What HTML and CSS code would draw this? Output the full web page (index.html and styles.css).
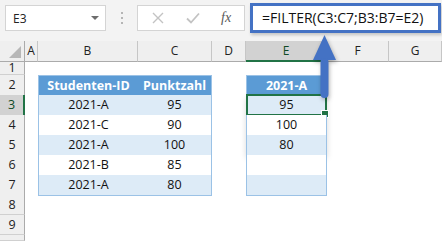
FILE: index.html
```html
<!DOCTYPE html>
<html lang="de">
<head>
  <meta charset="UTF-8" />
  <title>FILTER - Excel</title>
  <link rel="stylesheet" href="styles.css">
</head>
<body>

  <div class="formula-bar">
    <div class="name-box">
      <span>E3</span>
      <span class="drop"></span>
    </div>
    <div class="dots"><i></i><i></i><i></i></div>
    <div class="fx-buttons">
      <svg class="btn-icon" width="12" height="12" viewBox="0 0 12 12">
        <path d="M1 1 L11 11 M11 1 L1 11" stroke="#c3c3c3" stroke-width="1.4" fill="none" />
      </svg>
      <svg class="btn-icon" width="14" height="12" viewBox="0 0 14 12">
        <path d="M1 6.5 L5 10.5 L13 1.5" stroke="#c3c3c3" stroke-width="1.8" fill="none" />
      </svg>
      <span class="fx">fx</span>
    </div>
    <div class="formula-box">=FILTER(C3:C7;B3:B7=E2)</div>
  </div>

  <div class="sheet">
    <div class="row head-row">
      <div class="corner"><span class="tri"></span></div>
      <div class="col-head">A</div>
      <div class="col-head">B</div>
      <div class="col-head">C</div>
      <div class="col-head">D</div>
      <div class="col-head active">E</div>
      <div class="col-head">F</div>
      <div class="col-head">G</div>
    </div>

    <div class="row short">
      <div class="row-head">1</div>
      <div></div><div></div><div></div><div></div><div></div><div></div><div></div>
    </div>

    <div class="row">
      <div class="row-head">2</div>
      <div></div>
      <div class="cell th first">Studenten-ID</div>
      <div class="cell th last">Punktzahl</div>
      <div></div>
      <div class="cell th solo">2021-A</div>
      <div></div><div></div>
    </div>

    <div class="row">
      <div class="row-head active">3</div>
      <div></div>
      <div class="cell band first">2021-A</div>
      <div class="cell band last">95</div>
      <div></div>
      <div class="cell band solo">
        95
        <div class="spill"></div>
        <div class="selected"><span class="handle"></span></div>
      </div>
      <div></div><div></div>
    </div>

    <div class="row">
      <div class="row-head">4</div>
      <div></div>
      <div class="cell first">2021-C</div>
      <div class="cell last">90</div>
      <div></div>
      <div class="cell solo">100</div>
      <div></div><div></div>
    </div>

    <div class="row">
      <div class="row-head">5</div>
      <div></div>
      <div class="cell band first">2021-A</div>
      <div class="cell band last">100</div>
      <div></div>
      <div class="cell band solo">80</div>
      <div></div><div></div>
    </div>

    <div class="row">
      <div class="row-head">6</div>
      <div></div>
      <div class="cell first">2021-B</div>
      <div class="cell last">85</div>
      <div></div>
      <div class="cell solo"></div>
      <div></div><div></div>
    </div>

    <div class="row">
      <div class="row-head">7</div>
      <div></div>
      <div class="cell band first">2021-A</div>
      <div class="cell band last">80</div>
      <div></div>
      <div class="cell band solo"></div>
      <div></div><div></div>
    </div>

    <div class="row">
      <div class="row-head">8</div>
      <div></div><div></div><div></div><div></div><div></div><div></div><div></div>
    </div>

    <div class="row">
      <div class="row-head">9</div>
      <div></div><div></div><div></div><div></div><div></div><div></div><div></div>
    </div>

    <div class="row partial">
      <div class="row-head"></div>
      <div></div><div></div><div></div><div></div><div></div><div></div><div></div>
    </div>
  </div>

  <!-- pointer from the spill range up to the formula -->
  <svg class="arrow" width="30" height="70" viewBox="0 0 30 70">
    <path d="M12.5 0 L1 25 L24 25 Z" fill="#4472c4" />
    <rect x="8.5" y="23" width="8" height="40" rx="4" fill="#4472c4" />
  </svg>

</body>
</html>
```

FILE: styles.css
```css
body {
  margin: 0;
  width: 442px;
  height: 241px;
  overflow: hidden;
  background-color: white;
  font-family: "Open Sans", "Liberation Sans", sans-serif;
  position: relative;
}


/* formula bar */

.formula-bar {
  height: 41px;
  background-color: #f3f3f3;
  display: flex;
  align-items: flex-start;
  padding: 5px 0 0 5px;
  box-sizing: border-box;
}

.name-box {
  width: 101px;
  height: 26px;
  box-sizing: border-box;
  background-color: white;
  border: 1px solid #d4d4d4;
  display: flex;
  align-items: center;
  justify-content: space-between;
  padding: 0 6px 0 7px;
  font-size: 12px;
  color: #222;
}

.drop {
  width: 0;
  height: 0;
  border-left: 4px solid transparent;
  border-right: 4px solid transparent;
  border-top: 4px solid #6d6d6d;
}

.dots {
  width: 31px;
  height: 26px;
  display: flex;
  flex-direction: column;
  align-items: center;
  justify-content: center;
  gap: 3px;
}

.dots i {
  width: 2px;
  height: 2px;
  background-color: #b5b5b5;
}

.fx-buttons {
  width: 108px;
  height: 26px;
  box-sizing: border-box;
  background-color: white;
  border: 1px solid #d4d4d4;
  display: flex;
  align-items: center;
  padding-left: 14px;
  gap: 22px;
}

.fx {
  font-family: "Liberation Serif", serif;
  font-style: italic;
  font-size: 14px;
  color: #5a5a5a;
  margin-left: -1px;
}

.formula-box {
  width: 191px;
  height: 30px;
  margin: -2px 0 0 5px;
  box-sizing: border-box;
  background-color: white;
  border: 3px solid #4472c4;
  box-shadow: 1px 2px 3px rgba(0, 0, 0, 0.2);
  font-size: 14px;
  line-height: 24px;
  padding-left: 9px;
  color: #111;
  white-space: nowrap;
}


/* sheet */

.row {
  display: grid;
  grid-template-columns: 25px 13px 100px 74px 34px 81px 62px 53px;
  height: 20px;
}

.row.short {
  height: 14px;
}

.row.partial {
  height: 6px;
}

.head-row {
  background-color: #efefef;
}

.corner {
  position: relative;
  border-right: 1px solid #ababab;
  border-bottom: 1px solid #ababab;
}

.tri {
  position: absolute;
  right: 3px;
  bottom: 3px;
  width: 0;
  height: 0;
  border-left: 12px solid transparent;
  border-bottom: 12px solid #b7b7b7;
}

.col-head {
  border-right: 1px solid #c6c6c6;
  border-bottom: 1px solid #ababab;
  font-size: 12px;
  line-height: 19px;
  text-align: center;
  color: #222;
}

.col-head.active {
  background-color: #d2d2d2;
  border-bottom: 2px solid #217346;
  color: #0f4a26;
}

.row-head {
  background-color: #efefef;
  border-right: 1px solid #ababab;
  border-bottom: 1px solid #d0d0d0;
  box-sizing: border-box;
  font-size: 12.5px;
  line-height: 19px;
  text-align: center;
  color: #222;
}

.short .row-head {
  line-height: 13px;
}

.row-head.active {
  background-color: #d2d2d2;
  border-right: 2px solid #217346;
  color: #0f4a26;
}


/* table cells */

.cell {
  box-sizing: border-box;
  border-bottom: 1px solid #9bc2e6;
  font-size: 12.5px;
  line-height: 20px;
  text-align: center;
  color: #111;
  background-color: white;
  position: relative;
}

.cell.first {
  border-left: 1px solid #9bc2e6;
}

.cell.last {
  border-right: 1px solid #9bc2e6;
}

.cell.solo {
  border-left: 1px solid #9bc2e6;
  border-right: 1px solid #9bc2e6;
}

.cell.th {
  background-color: #5b9bd5;
  color: white;
  font-weight: bold;
  border-top: 1px solid #9bc2e6;
  border-bottom: none;
}

.cell.band {
  background-color: #ddebf7;
}


/* spill range and selection */

.spill {
  position: absolute;
  left: -1px;
  top: 0;
  width: 81px;
  height: 60px;
  box-sizing: border-box;
  border: 1px solid #3f6fc6;
  box-shadow: 0 3px 6px rgba(0, 0, 0, 0.15);
  pointer-events: none;
}

.selected {
  position: absolute;
  left: -1px;
  top: -1px;
  width: 81px;
  height: 22px;
  box-sizing: border-box;
  border: 2px solid #217346;
}

.handle {
  position: absolute;
  right: -4px;
  bottom: -4px;
  width: 6px;
  height: 6px;
  background-color: #217346;
  border: 1px solid white;
}

.arrow {
  position: absolute;
  left: 312px;
  top: 35px;
  filter: drop-shadow(1px 2px 2px rgba(0, 0, 0, 0.3));
}
```
